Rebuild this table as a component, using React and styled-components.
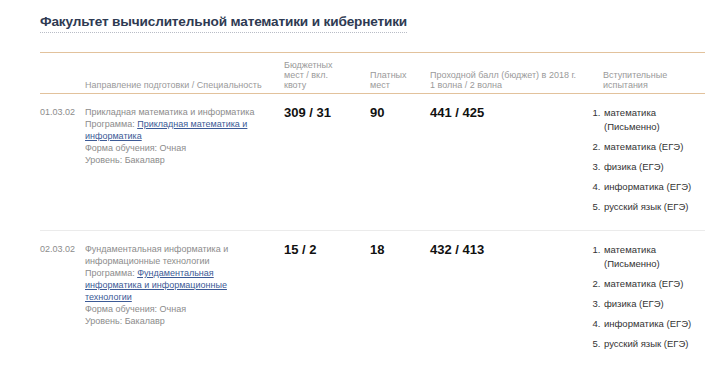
import React from 'react';
import styled, { createGlobalStyle } from 'styled-components';

const GlobalStyle = createGlobalStyle`
  body {
    margin: 0;
    background: #fff;
    font-family: "Liberation Sans", Arial, sans-serif;
  }
`;

const Page = styled.main`
  padding: 12px 17px 0 40px;
`;

const Heading = styled.h2`
  display: inline-block;
  margin: 0;
  padding-bottom: 2px;
  color: #2e3a52;
  font-size: 13.6px;
  line-height: 17px;
  font-weight: bold;
  letter-spacing: -0.15px;
  border-bottom: 1px dotted #b8bcc6;
`;

const Table = styled.div`
  margin-top: 19px;
  border-top: 1px solid #e2c29c;
`;

const Row = styled.div`
  display: grid;
  grid-template-columns: 45px 199px 86px 60px 163px 1fr;
  align-items: ${p => (p.head ? 'end' : 'start')};
  padding: ${p => (p.head ? '7px 0 3px' : '12px 0 16px')};
  border-bottom: 1px solid ${p => (p.head ? '#e2c29c' : p.last ? 'transparent' : '#ebebeb')};
`;

const HeadCell = styled.div`
  color: #9a9a9a;
  font-size: 9px;
  line-height: 10px;
  padding-left: ${p => p.indent || 0}px;
`;

const Code = styled.div`
  color: #8c8c8c;
  font-size: 9px;
  line-height: 12px;
`;

const Direction = styled.div`
  color: #8c8c8c;
  font-size: 9px;
  line-height: 12px;
  padding-right: 22px;
`;

const Link = styled.a`
  color: #3c5a96;
  text-decoration: underline;
`;

const Value = styled.div`
  color: #111;
  font-size: 13px;
  line-height: 13px;
  font-weight: bold;
`;

const Exams = styled.ol`
  margin: 0;
  padding: 0 0 0 10px;
  color: #333;
  font-size: 9.5px;
  line-height: 14px;
`;

const Exam = styled.li`
  margin-bottom: 6px;
  padding-left: 1px;
  &:last-child {
    margin-bottom: 0;
  }
`;

const exams = [
  'математика (Письменно)',
  'математика (ЕГЭ)',
  'физика (ЕГЭ)',
  'информатика (ЕГЭ)',
  'русский язык (ЕГЭ)',
];

const programs = [
  {
    code: '01.03.02',
    name: 'Прикладная математика и информатика',
    program: 'Прикладная математика и информатика',
    budget: '309 / 31',
    paid: '90',
    score: '441 / 425',
  },
  {
    code: '02.03.02',
    name: 'Фундаментальная информатика и информационные технологии',
    program: 'Фундаментальная информатика и информационные технологии',
    budget: '15 / 2',
    paid: '18',
    score: '432 / 413',
  },
];

export default function App() {
  return (
    <Page>
      <GlobalStyle />
      <Heading>Факультет вычислительной математики и кибернетики</Heading>
      <Table>
        <Row head>
          <HeadCell />
          <HeadCell>Направление подготовки / Специальность</HeadCell>
          <HeadCell>Бюджетных<br />мест / вкл.<br />квоту</HeadCell>
          <HeadCell>Платных<br />мест</HeadCell>
          <HeadCell>Проходной балл (бюджет) в 2018 г.<br />1 волна / 2 волна</HeadCell>
          <HeadCell indent={10}>Вступительные<br />испытания</HeadCell>
        </Row>
        {programs.map((p, i) => (
          <Row key={p.code} last={i === programs.length - 1}>
            <Code>{p.code}</Code>
            <Direction>
              {p.name}<br />
              Программа: <Link href="#">{p.program}</Link><br />
              Форма обучения: Очная<br />
              Уровень: Бакалавр
            </Direction>
            <Value>{p.budget}</Value>
            <Value>{p.paid}</Value>
            <Value>{p.score}</Value>
            <Exams>
              {exams.map(e => <Exam key={e}>{e}</Exam>)}
            </Exams>
          </Row>
        ))}
      </Table>
    </Page>
  );
}
